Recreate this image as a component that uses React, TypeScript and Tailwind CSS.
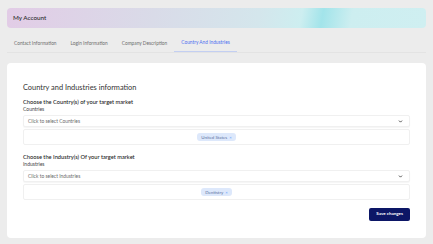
import { ChevronDown } from "lucide-react";

const tabs = ["Contact Information", "Login Information", "Company Description", "Country And Industries"];

function MultiSelect({ placeholder, tag }: { placeholder: string; tag: string }) {
	return (
		<div className="mt-[2px] flex flex-col gap-[2px]">
			<div className="flex h-[12px] items-center justify-between rounded-[2px] border border-[#f0f0f0] bg-white pl-[4px] pr-[6px] shadow-[0_1px_1px_rgba(0,0,0,0.04)]">
				<span className="text-[4.9px] leading-[6px] text-[#6b6b6b]">{placeholder}</span>
				<ChevronDown className="h-[5px] w-[5px] text-[#333]" strokeWidth={4} />
			</div>
			<div className="flex h-[16px] items-center justify-center rounded-[2px] border border-[#f0f0f0] bg-white">
				<span className="flex items-center gap-[2px] rounded-[3px] bg-[#dde8fb] px-[4px] py-[1.5px] text-[4.4px] leading-[5px] text-[#5c6f9c]">
					{tag}
					<span className="text-[4.4px] text-[#5aa0ff]">×</span>
				</span>
			</div>
		</div>
	);
}

export default function App() {
	return (
		<div className="min-h-[244px] w-[433px] bg-[#ececec] px-[7px] pt-[8px] font-['Lato',sans-serif]">
			<header className="flex h-[20px] items-center rounded-[4px] bg-[linear-gradient(100deg,#e2cce6_0%,#d9dbe8_35%,#d4e6ec_60%,#cdeef0_70%,#a2e4ea_75%,#cdeef0_82%,#cfeff1_100%)] px-[6px]">
				<h1 className="text-[6.3px] font-medium text-[#2b2b2b]">My Account</h1>
			</header>

			<nav className="mt-[6px] flex h-[19px] items-end border-b border-[#e3e3e3]">
				{tabs.map((t, i) => (
					<div
						key={t}
						className={
							i === 3
								? "border-b-[1.5px] border-[#c3cff2] px-[7px] pb-[5px] text-[4.8px] text-[#4d6ef0]"
								: "px-[7px] pb-[5px] text-[4.8px] text-[#6e6e6e]"
						}
					>
						{t}
					</div>
				))}
			</nav>

			<main className="mt-[10px] h-[175px] rounded-[4px] bg-white px-[16px] pt-[20px]">
				<h2 className="text-[7.4px] leading-[10px] text-[#333]">Country and Industries information</h2>

				<section className="mt-[5px]">
					<h3 className="text-[5.7px] font-medium leading-[8px] text-[#222]">Choose the Country(s) of your target market</h3>
					<p className="text-[5px] leading-[7px] text-[#444]">Countries</p>
					<MultiSelect placeholder="Click to select Countries" tag="United States" />
				</section>

				<section className="mt-[8px]">
					<h3 className="text-[5.7px] font-medium leading-[8px] text-[#222]">Choose the Industry(s) Of your target market</h3>
					<p className="text-[5px] leading-[7px] text-[#444]">Industries</p>
					<MultiSelect placeholder="Click to select Industries" tag="Dentistry" />
				</section>

				<div className="mt-[8px] flex justify-end">
					<button className="h-[13px] rounded-[2px] bg-[#0c1666] px-[7px] text-[4.5px] font-bold text-white">
						Save changes
					</button>
				</div>
			</main>
		</div>
	);
}
